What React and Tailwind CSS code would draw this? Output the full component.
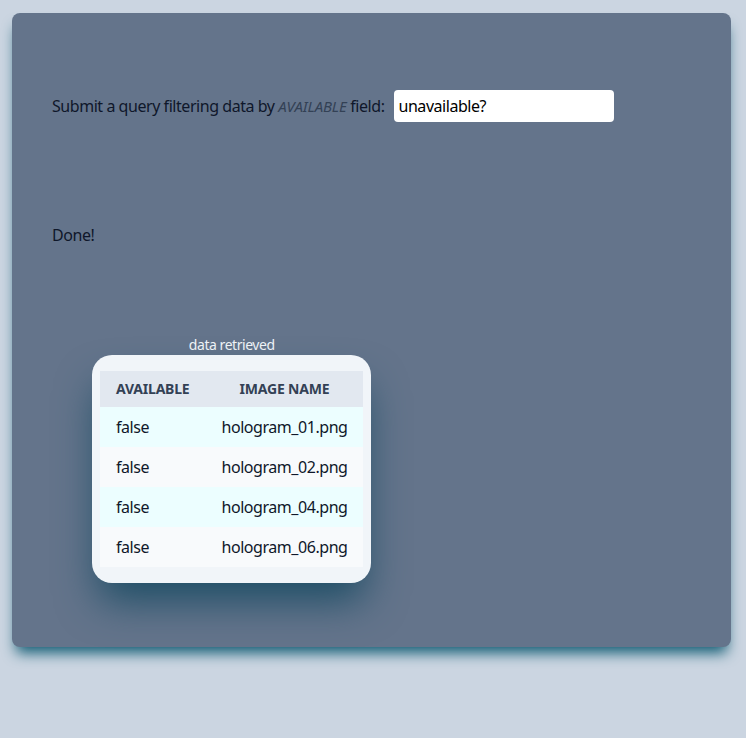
import React, { useState } from "react";

const ROWS = [
  { available: "false", name: "hologram_01.png" },
  { available: "false", name: "hologram_02.png" },
  { available: "false", name: "hologram_04.png" },
  { available: "false", name: "hologram_06.png" },
];

export default function App() {
  const [query, setQuery] = useState("unavailable?");

  return (
    <div className="min-h-[738px] bg-[#cbd5e1] pt-[13px] pb-[91px] pl-3 pr-[15px] font-['Noto_Sans',sans-serif] text-base tracking-[-0.45px] text-[#0f172a]">
      <div className="h-[634px] rounded-lg bg-[#64748b] pl-10 pt-[77px] shadow-[0_10px_14px_-4px_#155e75]">
        <div className="flex items-center">
          <span>
            Submit a query filtering data by <em className="text-[15px] tracking-[-0.1px] text-[#334155]">AVAILABLE</em> field:
          </span>
          <input
            value={query}
            onChange={(e) => setQuery(e.target.value)}
            className="ml-[10px] h-8 w-[220px] rounded bg-white px-1 text-base tracking-[-0.45px] text-black outline-none"
          />
        </div>

        <p className="mt-[101px] leading-6">Done!</p>

        <figure className="ml-10 mt-[88px] inline-flex flex-col items-center">
          <figcaption className="text-sm leading-5 text-[#f1f5f9]">data retrieved</figcaption>
          <div className="rounded-[20px] bg-[#f1f5f9] px-2 py-4 shadow-[0_24px_40px_-6px_#1e4e66]">
            <table className="border-collapse">
              <thead className="bg-[#e2e8f0]">
                <tr className="h-9 text-sm font-bold uppercase tracking-[-0.2px] text-[#334155]">
                  <th className="px-4">Available</th>
                  <th className="px-4">Image name</th>
                </tr>
              </thead>
              <tbody>
                {ROWS.map((r, i) => (
                  <tr key={r.name} className={`h-10 ${i % 2 === 0 ? "bg-[#ecfeff]" : "bg-[#f8fafc]"}`}>
                    <td className="px-4">{r.available}</td>
                    <td className="px-4">{r.name}</td>
                  </tr>
                ))}
              </tbody>
            </table>
          </div>
        </figure>
      </div>
    </div>
  );
}
